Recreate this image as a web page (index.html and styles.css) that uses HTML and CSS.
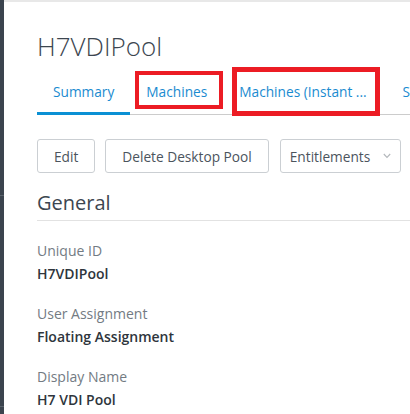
FILE: index.html
```html
<!DOCTYPE html>
<html lang="en">
<head>
<meta charset="utf-8">
<title>H7VDIPool</title>
<link rel="stylesheet" href="styles.css">
</head>
<body>
<div class="app">
  <div class="sidebar">
    <div class="side-item side-a"></div>
    <div class="side-item side-b"></div>
  </div>
  <main class="main">
    <h1 class="title">H7VDIPool</h1>
    <nav class="tabs">
      <a class="tab active">Summary</a>
      <a class="tab">Machines</a>
      <a class="tab tab-truncated">Machines (Instant ...</a>
      <a class="tab">Sessions</a>
    </nav>
    <div class="actions">
      <button class="btn">Edit</button>
      <button class="btn">Delete Desktop Pool</button>
      <button class="btn btn-dropdown">Entitlements
        <svg class="chev" width="8" height="6" viewBox="0 0 8 6"><polyline points="0.8,1 4,4.4 7.2,1" fill="none" stroke="#b3b7bb" stroke-width="1.1"/></svg>
      </button>
    </div>
    <h2 class="section-title">General</h2>
    <dl class="props">
      <div class="prop"><dt>Unique ID</dt><dd>H7VDIPool</dd></div>
      <div class="prop"><dt>User Assignment</dt><dd>Floating Assignment</dd></div>
      <div class="prop"><dt>Display Name</dt><dd>H7 VDI Pool</dd></div>
    </dl>
  </main>
</div>
<div class="mark mark-1"></div>
<div class="mark mark-2"></div>
</body>
</html>
```
FILE: styles.css
```css
html, body {
  margin: 0;
  padding: 0;
  width: 410px;
  height: 414px;
  overflow: hidden;
  background: #ffffff;
  font-family: "Open Sans", "Liberation Sans", sans-serif;
}

.app {
  display: flex;
  height: 414px;
}

.sidebar {
  width: 4px;
  flex: none;
  background: #3b444e;
  display: flex;
  flex-direction: column;
}

.side-item {
  border-bottom: 1px solid #5a636c;
}
.side-a { height: 195px; }
.side-b { height: 210px; }

.main {
  flex: 1;
  min-width: 0;
  border-top: 2px solid #e8e8e8;
  padding-left: 33px;
  overflow: hidden;
}

.title {
  margin: 28px 0 0;
  font-size: 26px;
  line-height: 32px;
  font-weight: 300;
  color: #3c4650;
  white-space: nowrap;
}

.tabs {
  margin-top: 19px;
  display: flex;
  border-bottom: 1px solid #cccccc;
  white-space: nowrap;
}

.tab {
  flex: none;
  padding: 0 16px 12px;
  margin-bottom: -1px;
  font-size: 13.7px;
  line-height: 22px;
  color: #1a8bd0;
}

.tab.tab-truncated {
  padding-right: 20px;
}

.tab.active {
  box-shadow: inset 0 -3px 0 #0a90d4;
}

.actions {
  margin-top: 24px;
  display: flex;
  gap: 10px;
}

.btn {
  height: 34px;
  padding: 0 16px;
  border: 1px solid #cbcfd3;
  border-radius: 3px;
  background: #ffffff;
  font-family: inherit;
  font-size: 13.7px;
  color: #4b545d;
  white-space: nowrap;
  display: flex;
  align-items: center;
}

.btn-dropdown {
  margin-left: 1px;
  padding: 0 9px;
  gap: 13px;
}

.chev { display: block; }

.section-title {
  margin: 16px 0 0;
  padding-bottom: 3px;
  font-size: 20px;
  line-height: 28px;
  font-weight: 400;
  color: #3c4650;
  border-bottom: 1px solid #e2e2e2;
}

.props {
  margin: 18px 0 0;
  display: flex;
  flex-direction: column;
  gap: 17px;
}

.prop dt {
  font-size: 14px;
  line-height: 24px;
  color: #737b83;
}

.prop dd {
  margin: 0;
  font-size: 14px;
  line-height: 22px;
  font-weight: 600;
  color: #2e353c;
}

.mark {
  position: absolute;
  box-sizing: border-box;
  border-style: solid;
  border-color: #ec1c24;
}
.mark-1 {
  left: 135px;
  top: 71px;
  width: 88px;
  height: 38px;
  border-width: 4px;
}
.mark-2 {
  left: 232px;
  top: 67px;
  width: 148px;
  height: 49px;
  border-width: 5px;
}
```
